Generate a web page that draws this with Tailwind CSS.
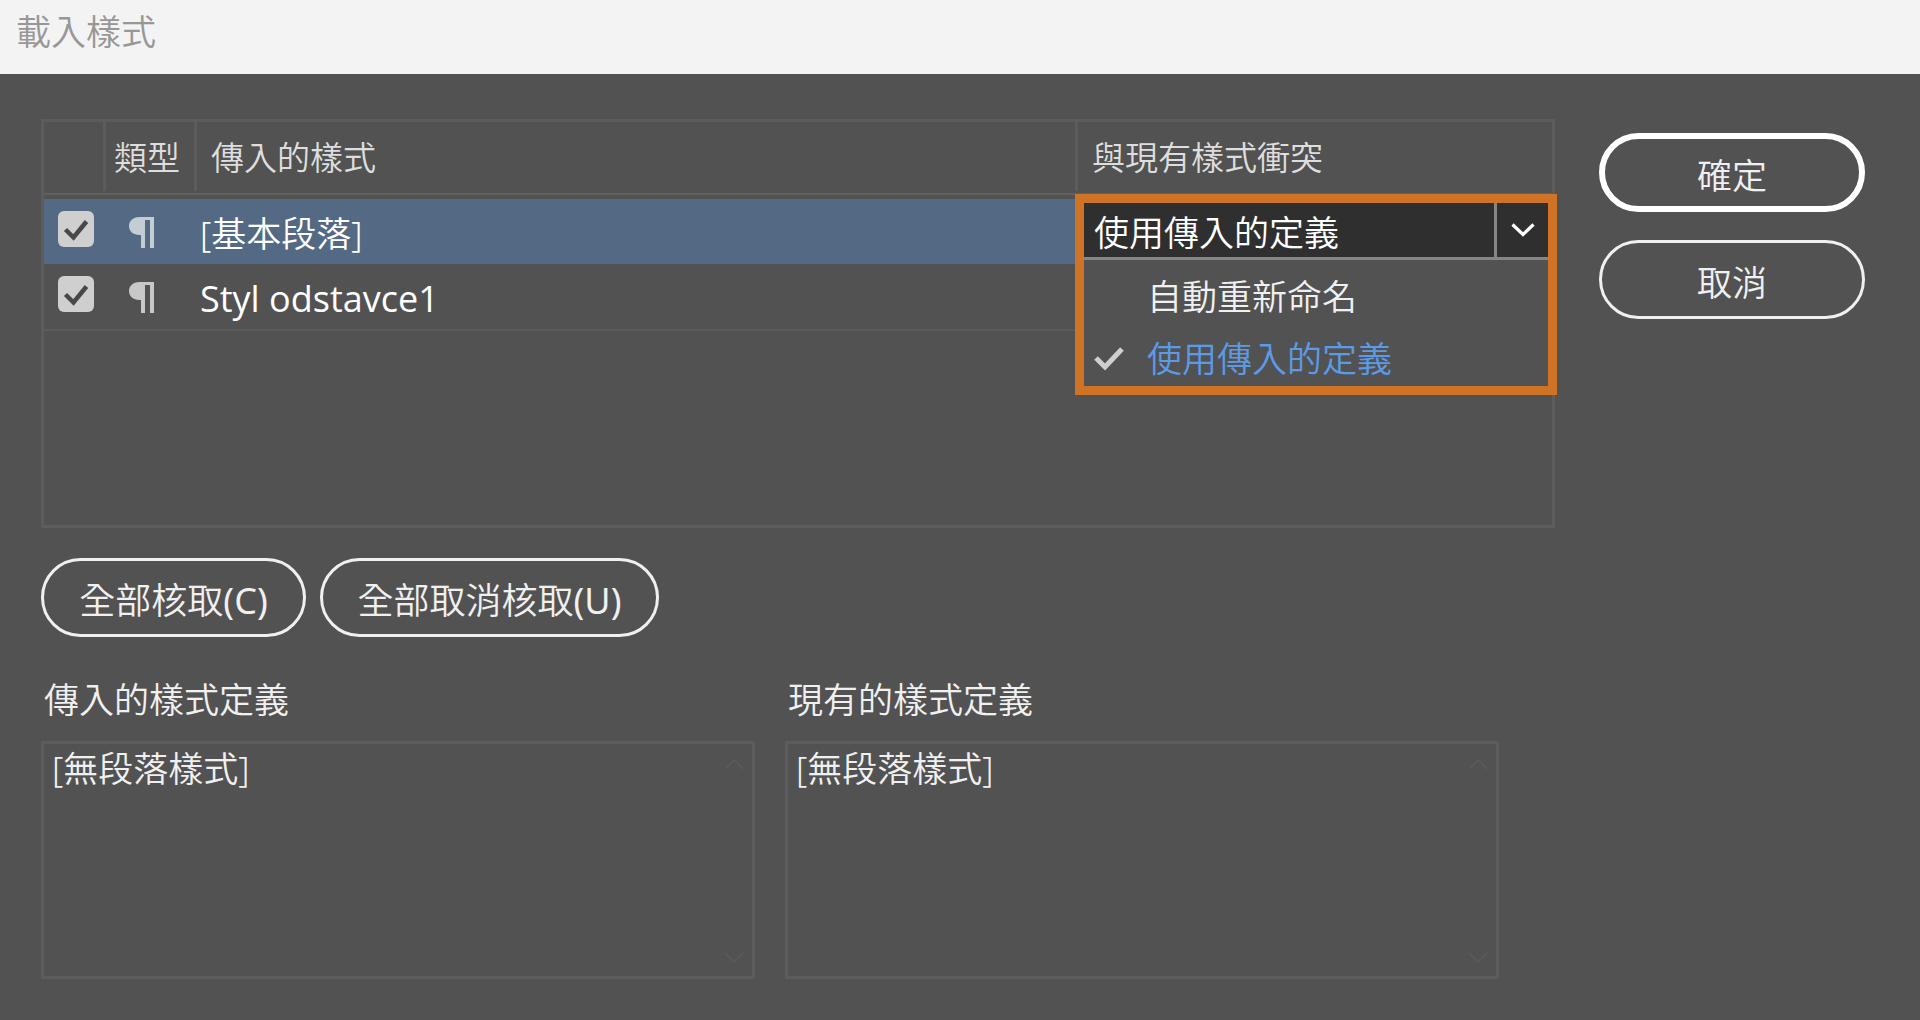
<!DOCTYPE html>
<html lang="zh-Hant">

<head>
    <meta charset="UTF-8">
    <meta name="viewport" content="width=device-width, initial-scale=1.0">
    <title>載入樣式</title>
    <script src="https://cdn.jsdelivr.net/npm/@tailwindcss/browser@4"></script>
</head>

<body class="min-h-screen bg-[#525252] font-['Noto_Sans','Noto_Sans_CJK_TC',sans-serif] text-[35px] leading-[48px] font-[350] text-[#f0f0f0]">
    <header class="h-[74px] bg-[#f3f3f3] px-4 pt-2">
        <h1 class="font-[350] text-[#979797]">載入樣式</h1>
    </header>

    <main class="flex items-start gap-11 pt-[45px] pr-[55px] pl-[41px]">
        <div class="min-w-0 flex-1">
            <!-- Style list -->
            <div class="h-[409px] border-[3px] border-[#5c5c5c]">
                <table class="w-full table-fixed border-separate border-spacing-0 text-left">
                    <colgroup>
                        <col class="w-[62px]">
                        <col class="w-[91px]">
                        <col>
                        <col class="w-[474px]">
                    </colgroup>
                    <thead class="text-[33px] text-[#dedede]">
                        <tr>
                            <th class="border-b-4 border-[#525252] p-0 font-[350]">
                                <div class="border-b-2 border-[#62605e] pb-[2px]">
                                    <div class="h-[69px] border-r-[3px] border-[#5c5c5c]"></div>
                                </div>
                            </th>
                            <th class="border-b-4 border-[#525252] p-0 font-[350]">
                                <div class="border-b-2 border-[#62605e] pb-[2px]">
                                    <div class="h-[69px] border-r-[3px] border-[#5c5c5c] pt-3 pl-2">類型</div>
                                </div>
                            </th>
                            <th class="border-b-4 border-[#525252] p-0 font-[350]">
                                <div class="border-b-2 border-[#62605e] pb-[2px]">
                                    <div class="h-[69px] border-r-[3px] border-[#5c5c5c] pt-3 pl-[14px]">傳入的樣式</div>
                                </div>
                            </th>
                            <th class="border-b-4 border-[#525252] p-0 font-[350]">
                                <div class="border-b-2 border-[#62605e] pb-[2px]">
                                    <div class="h-[69px] pt-3 pl-[14px]">與現有樣式衝突</div>
                                </div>
                            </th>
                        </tr>
                    </thead>
                    <tbody>
                        <tr class="h-[65px] bg-[#546a84]">
                            <td class="p-0 pb-[6px] pl-[14px]">
                                <div class="grid w-9">
                                    <input id="style-1" type="checkbox" checked aria-label="[基本段落]" class="col-start-1 row-start-1 size-9 appearance-none rounded-[6px] bg-[#cfcfcf]">
                                    <svg viewBox="0 0 36 36" class="pointer-events-none col-start-1 row-start-1 size-9" fill="none" stroke="#484848" stroke-width="4.5"><path d="M7.5 18.5l8 8L28.500 10.500" /></svg>
                                </div>
                            </td>
                            <td class="p-0 pl-[22px]">
                                <svg viewBox="0 0 26 32" class="h-8 w-[26px]" fill="#c4ccd4"><path d="M11.5 1H26v31h-4V4h-5v28h-4V19h-1.500C5 19 1 15 1 10S5 1 11.500 1z" /></svg>
                            </td>
                            <td class="p-0 pt-1 pl-[3px]"><label for="style-1" class="text-white">[基本段落]</label></td>
                            <td class="relative p-0">
                                <!-- Conflict menu, open over the rows below -->
                                <div class="absolute top-[-5px] right-[-5px] left-[-3px] border-[9px] border-[#cf7327] bg-[#525252]">
                                    <div class="grid h-[57px] border-b-[3px] border-[#868686] bg-[#2f2f2f]">
                                        <select aria-label="與現有樣式衝突" class="col-start-1 row-start-1 appearance-none pt-[6px] pl-[10px] text-white">
                                            <option>自動重新命名</option>
                                            <option selected>使用傳入的定義</option>
                                        </select>
                                        <div class="pointer-events-none col-start-1 row-start-1 flex w-[54px] items-center justify-center justify-self-end border-l-[3px] border-[#868686]">
                                            <svg viewBox="0 0 24 14" class="h-[14px] w-6" fill="none" stroke="#fff" stroke-width="3.2"><path d="M1.500 1.500L12 11.500L22.500 1.500" /></svg>
                                        </div>
                                    </div>
                                    <ul role="listbox" aria-label="與現有樣式衝突" class="h-[126px]">
                                        <li role="option" aria-selected="false" class="flex h-[62px] items-center pt-3 pl-[63px]">自動重新命名</li>
                                        <li role="option" aria-selected="true" class="flex h-[62px] items-center gap-[23px] pt-3 pl-[10px] text-[#5c9ae6]">
                                            <svg viewBox="0 0 30 24" class="h-6 w-[30px]" fill="none" stroke="#cfcfcf" stroke-width="5"><path d="M2 11l9 9L28 2" /></svg>
                                            使用傳入的定義
                                        </li>
                                    </ul>
                                </div>
                            </td>
                        </tr>
                        <tr class="h-[67px]">
                            <td class="border-b-2 border-[#5c5c5c] p-0 pb-[6px] pl-[14px]">
                                <div class="grid w-9">
                                    <input id="style-2" type="checkbox" checked aria-label="Styl odstavce1" class="col-start-1 row-start-1 size-9 appearance-none rounded-[6px] bg-[#cfcfcf]">
                                    <svg viewBox="0 0 36 36" class="pointer-events-none col-start-1 row-start-1 size-9" fill="none" stroke="#484848" stroke-width="4.5"><path d="M7.5 18.5l8 8L28.500 10.500" /></svg>
                                </div>
                            </td>
                            <td class="border-b-2 border-[#5c5c5c] p-0 pl-[22px]">
                                <svg viewBox="0 0 26 32" class="h-8 w-[26px]" fill="#c8c8c8"><path d="M11.5 1H26v31h-4V4h-5v28h-4V19h-1.500C5 19 1 15 1 10S5 1 11.500 1z" /></svg>
                            </td>
                            <td class="border-b-2 border-[#5c5c5c] p-0 pt-1 pl-[3px]"><label for="style-2" class="font-['Open_Sans',sans-serif] text-[36px] font-normal text-white">Styl odstavce1</label></td>
                            <td class="border-b-2 border-[#5c5c5c] p-0"></td>
                        </tr>
                    </tbody>
                </table>
            </div>

            <div class="mt-[30px] flex gap-[14px] text-[36px]">
                <button type="button" class="h-[79px] w-[265px] rounded-full border-[3px] border-[#f0f0f0] pt-[6px]">全部核取<span class="font-normal">(C)</span></button>
                <button type="button" class="h-[79px] w-[339px] rounded-full border-[3px] border-[#f0f0f0] pt-[6px]">全部取消核取<span class="font-normal">(U)</span></button>
            </div>

            <!-- Style definitions -->
            <div class="mt-[39px] mr-14 grid grid-cols-2 gap-[30px]">
                <div>
                    <label for="incoming" class="block pl-[3px]">傳入的樣式定義</label>
                    <div class="mt-[17px] flex h-[238px] border-[3px] border-[#5c5c5c]">
                        <textarea id="incoming" readonly class="min-w-0 flex-1 resize-none overflow-hidden pt-px pl-2 outline-none">[無段落樣式]</textarea>
                        <div class="flex w-9 flex-col items-center justify-between pt-[14px] pb-3">
                            <svg viewBox="0 0 20 12" class="h-3 w-5" fill="none" stroke="#595959" stroke-width="2"><path d="M1 11L10 2L19 11" /></svg>
                            <svg viewBox="0 0 20 12" class="h-3 w-5" fill="none" stroke="#595959" stroke-width="2"><path d="M1 1L10 10L19 1" /></svg>
                        </div>
                    </div>
                </div>
                <div>
                    <label for="existing" class="block pl-[3px]">現有的樣式定義</label>
                    <div class="mt-[17px] flex h-[238px] border-[3px] border-[#5c5c5c]">
                        <textarea id="existing" readonly class="min-w-0 flex-1 resize-none overflow-hidden pt-px pl-2 outline-none">[無段落樣式]</textarea>
                        <div class="flex w-9 flex-col items-center justify-between pt-[14px] pb-3">
                            <svg viewBox="0 0 20 12" class="h-3 w-5" fill="none" stroke="#595959" stroke-width="2"><path d="M1 11L10 2L19 11" /></svg>
                            <svg viewBox="0 0 20 12" class="h-3 w-5" fill="none" stroke="#595959" stroke-width="2"><path d="M1 1L10 10L19 1" /></svg>
                        </div>
                    </div>
                </div>
            </div>
        </div>

        <div class="mt-[14px] flex w-[266px] flex-col gap-7">
            <button type="submit" class="h-[79px] rounded-full border-[6px] border-white pt-[6px]">確定</button>
            <button type="button" class="h-[79px] rounded-full border-[3px] border-[#f0f0f0] pt-[6px]">取消</button>
        </div>
    </main>
</body>

</html>
